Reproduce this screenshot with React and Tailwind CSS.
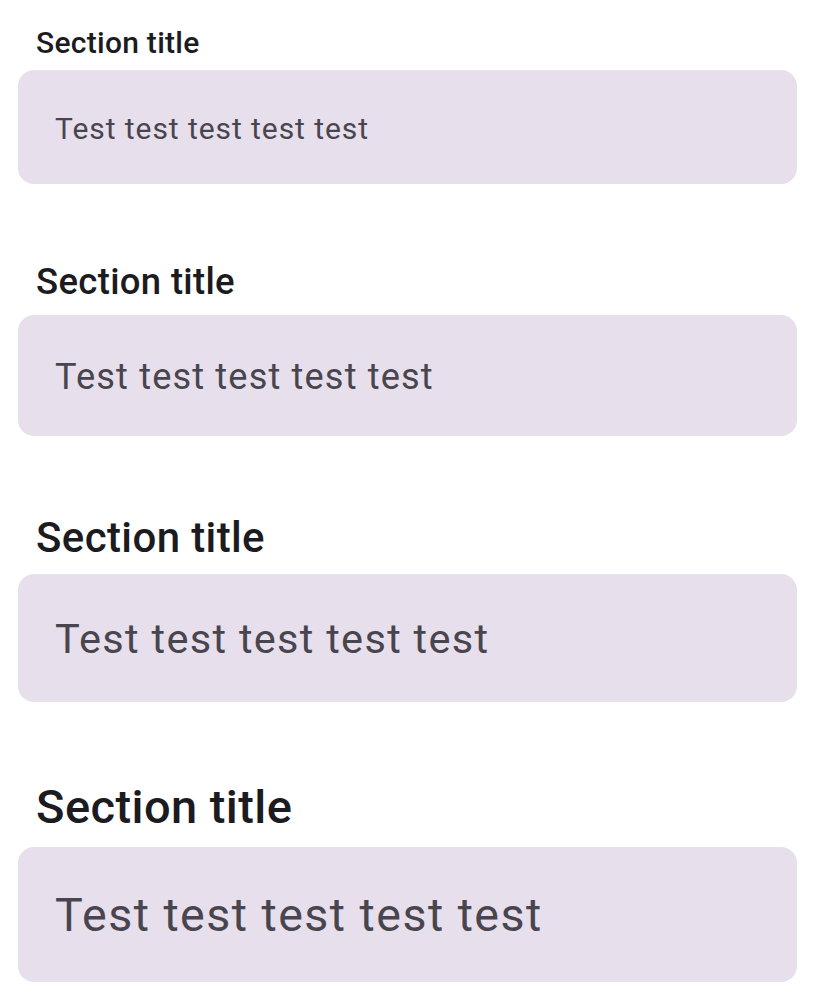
const sections = [
  { title: 'text-[30px]', body: 'text-[30px]', box: 'h-[114px]', gap: '' },
  { title: 'text-[36.5px]', body: 'text-[36.2px]', box: 'h-[121px]', gap: 'mt-[71px]' },
  { title: 'text-[42px]', body: 'text-[41.5px]', box: 'h-[128px]', gap: 'mt-[70px]' },
  { title: 'text-[47px]', body: 'text-[46.6px]', box: 'h-[135px]', gap: 'mt-[70px]' },
];

function Section({ s }) {
  return (
    <div className={s.gap}>
      <h2 className={`${s.title} px-[18px] font-medium leading-[1.5] tracking-[0.009em] text-[#1c1b1f]`}>
        Section title
      </h2>
      <div className={`${s.box} mt-[5px] flex items-center rounded-[16px] bg-[#e7dfeb] px-[37px]`}>
        <p className={`${s.body} pt-[3px] leading-[1.5] tracking-[0.03125em] text-[#49454f]`}>
          Test test test test test
        </p>
      </div>
    </div>
  );
}

export default function App() {
  return (
    <div className="min-h-screen bg-white px-[18px] pt-[20px]" style={{ fontFamily: 'Roboto, "Noto Sans", sans-serif' }}>
      {sections.map((s, i) => (
        <Section key={i} s={s} />
      ))}
    </div>
  );
}
